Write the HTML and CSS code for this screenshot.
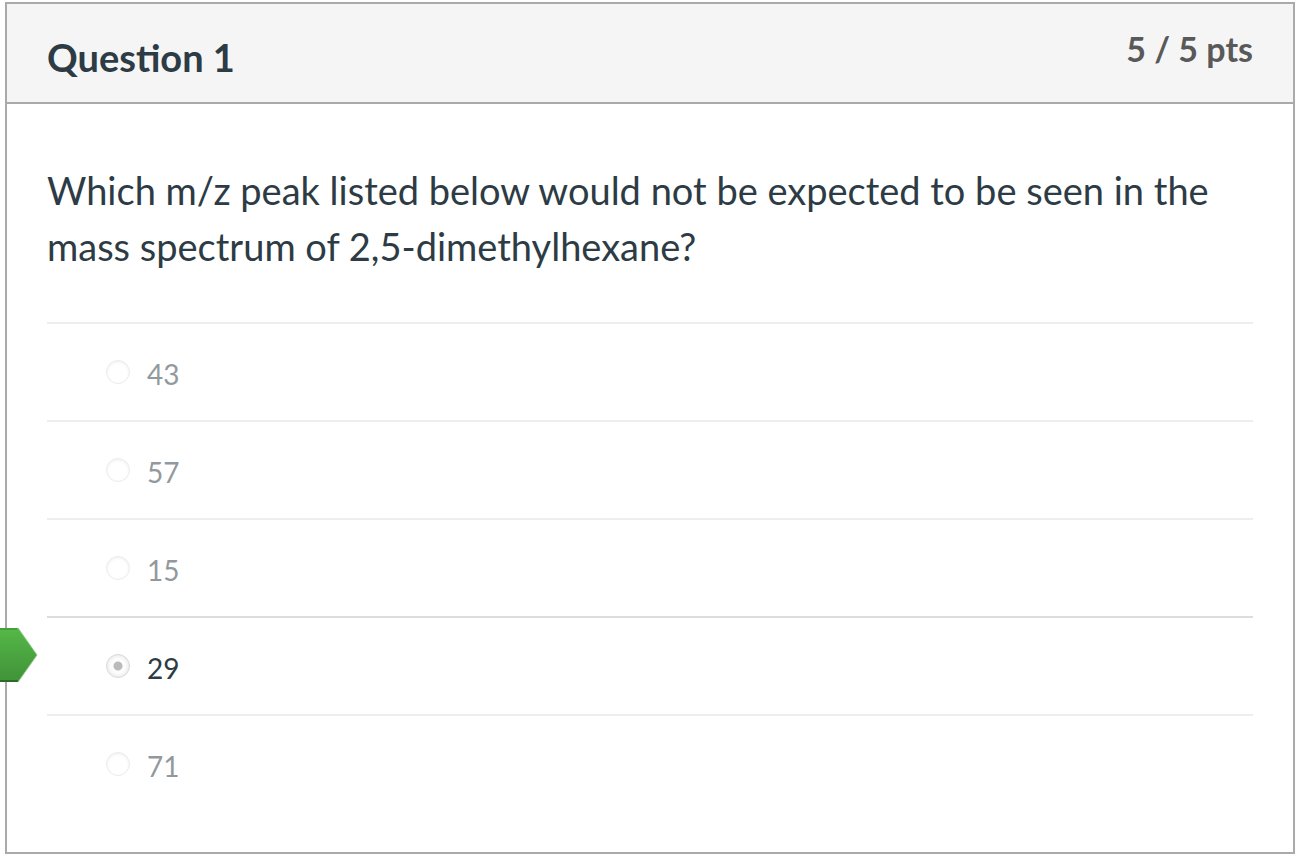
FILE: index.html
```html
<!DOCTYPE html>
<html lang="en">
<head>
<meta charset="utf-8">
<meta name="viewport" content="width=device-width, initial-scale=1">
<title>Question 1</title>
<link rel="stylesheet" href="styles.css">
</head>
<body>
<main class="question">
  <header class="question-header">
    <h1 class="question-name">Question 1</h1>
    <div class="question-points">5 / 5 pts</div>
  </header>
  <form class="question-body">
    <p class="question-text" id="prompt">Which m/z peak listed below would not be expected to be seen in the mass spectrum of 2,5-dimethylhexane?</p>
    <div class="answers" role="radiogroup" aria-labelledby="prompt">
      <div class="answer"><input class="answer-input" type="radio" name="answer" id="a43" disabled><label class="answer-label" for="a43">43</label></div>
      <div class="answer"><input class="answer-input" type="radio" name="answer" id="a57" disabled><label class="answer-label" for="a57">57</label></div>
      <div class="answer"><input class="answer-input" type="radio" name="answer" id="a15" disabled><label class="answer-label" for="a15">15</label></div>
      <div class="answer answer-selected">
        <svg class="answer-flag" width="38" height="54" viewBox="0 0 38 54" aria-hidden="true">
          <defs><linearGradient id="flag" x1="0" y1="0" x2="0" y2="1"><stop offset="0" stop-color="#55b848"/><stop offset="1" stop-color="#409238"/></linearGradient></defs>
          <path d="M0 0H18L37 27L18 54H0Z" fill="url(#flag)"/>
          <path d="M0 1H17" fill="none" stroke="#3f9a35" stroke-width="1.5"/>
          <path d="M0 53H18" fill="none" stroke="#2c6b27" stroke-width="2"/>
          <path d="M18 0L37 27L18 54" fill="none" stroke="#8cc785" stroke-width="1"/>
        </svg>
        <input class="answer-input" type="radio" name="answer" id="a29" checked disabled><label class="answer-label" for="a29">29</label>
      </div>
      <div class="answer"><input class="answer-input" type="radio" name="answer" id="a71" disabled><label class="answer-label" for="a71">71</label></div>
    </div>
  </form>
</main>
</body>
</html>
```
FILE: styles.css
```css
* { box-sizing: border-box; }
body {
  margin: 0;
  background: #fff;
  color: #2d3b45;
  font-family: Lato, "Liberation Sans", sans-serif;
}
.question {
  margin: 2px 9px 4px 5px;
  border: 2px solid #aaa;
}
.question-header {
  display: flex;
  justify-content: space-between;
  align-items: flex-start;
  padding: 21px 40px 21px;
  background: #f5f5f5;
  border-bottom: 2px solid #aaa;
}
.question-name {
  margin: 8px 0 0;
  font-size: 38px;
  line-height: 48px;
  font-weight: 700;
}
.question-points {
  color: #595959;
  font-size: 34px;
  line-height: 48px;
  font-weight: 700;
}
.question-body { padding: 58px 40px 40px; }
.question-text {
  margin: 0 0 48px;
  font-size: 38px;
  line-height: 56px;
}
.answer {
  position: relative;
  display: flex;
  align-items: center;
  gap: 17px;
  padding: 24px 59px;
  border-top: 2px solid #eee;
  color: #92999e;
}
.answer-selected {
  border-top-color: #ddd;
  color: #2d3b45;
}
.answer-input {
  appearance: none;
  width: 24px;
  height: 24px;
  margin: 0;
  border: 1px solid #ececec;
  border-radius: 50%;
  background: #fff;
  box-shadow: inset 0 1px 3px #eee;
}
.answer-input:checked {
  border-color: #d8d8d8;
  background: radial-gradient(circle, #bbb 4px, #fdfdfd 5px);
  box-shadow: inset 0 0 4px #ddd;
}
.answer-label {
  padding-top: 4px;
  font-size: 28px;
  line-height: 44px;
}
.answer-flag {
  position: absolute;
  left: -47px;
  top: 10px;
}
```
